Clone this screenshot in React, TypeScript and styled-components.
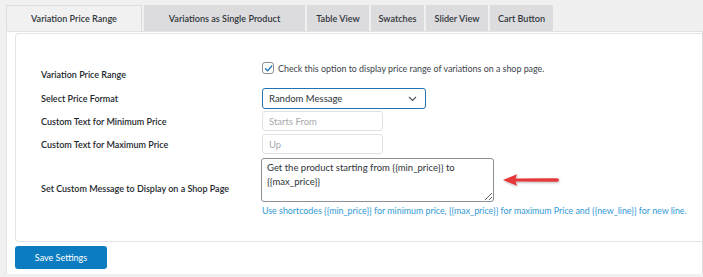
import React from "react";
import styled, { createGlobalStyle } from "styled-components";

const GlobalStyle = createGlobalStyle`
  html, body {
    margin: 0;
    padding: 0;
    background: #f0f0f1;
  }
  body {
    font-family: Lato, "Open Sans", sans-serif;
    font-size: 9.5px;
    color: #2c3338;
  }
`;

const tabs = [
  { label: "Variation Price Range", width: 136 },
  { label: "Variations as Single Product", width: 161 },
  { label: "Table View", width: 62 },
  { label: "Swatches", width: 53 },
  { label: "Slider View", width: 62 },
  { label: "Cart Button", width: 63 },
];

const App = () => (
  <Page>
    <GlobalStyle />
    <TabBar>
      {tabs.map((t, i) => (
        <Tab key={t.label} $active={i === 0} $width={t.width}>
          {t.label}
        </Tab>
      ))}
    </TabBar>
    <Panel>
      <Card>
        <Row $top={0} $height={28}>
          <Label $shift={3}>Variation Price Range</Label>
          <CheckField>
            <CheckBox>
              <svg width="9" height="9" viewBox="0 0 10 10">
                <path d="M1.6 5.2 L4 7.6 L8.6 2.2" fill="none" stroke="#2271b1" strokeWidth="1.5" strokeLinecap="round" strokeLinejoin="round" />
              </svg>
            </CheckBox>
            <CheckText>Check this option to display price range of variations on a shop page.</CheckText>
          </CheckField>
        </Row>
        <Row $top={1}>
          <Label>Select Price Format</Label>
          <SelectWrap>
            <Select defaultValue="random">
              <option value="random">Random Message</option>
            </Select>
            <Chevron width="9" height="6" viewBox="0 0 9 6">
              <path d="M1 1 L4.5 4.5 L8 1" fill="none" stroke="#50575e" strokeWidth="1.2" />
            </Chevron>
          </SelectWrap>
        </Row>
        <Row $top={2}>
          <Label>Custom Text for Minimum Price</Label>
          <TextInput placeholder="Starts From" />
        </Row>
        <Row $top={3}>
          <Label>Custom Text for Maximum Price</Label>
          <TextInput placeholder="Up" />
        </Row>
        <Row $top={4}>
          <Label>Set Custom Message to Display on a Shop Page</Label>
          <Field>
            <AreaLine>
              <TextArea defaultValue="Get the product starting from {{min_price}} to {{max_price}}" />
              <Arrow width="60" height="16" viewBox="0 0 60 16">
                <defs>
                  <filter id="sh" x="-10%" y="-30%" width="130%" height="180%">
                    <feDropShadow dx="0.5" dy="1" stdDeviation="0.8" floodColor="#000" floodOpacity="0.3" />
                  </filter>
                </defs>
                <g filter="url(#sh)">
                  <path d="M1 7 L15 1.2 L13.6 5.4 L55 5.2 Q57 5.4 57 7 Q57 8.6 55 8.8 L13.6 8.6 L15 12.8 Z" fill="#e5393a" />
                </g>
              </Arrow>
            </AreaLine>
            <Help>
              Use shortcodes {"{{min_price}}"} for minimum price, {"{{max_price}}"} for maximum Price and {"{{new_line}}"} for new line.
            </Help>
          </Field>
        </Row>
      </Card>
      <SaveButton type="button">Save Settings</SaveButton>
    </Panel>
  </Page>
);

export default App;

const Page = styled.div`
  width: 703px;
  height: 277px;
  overflow: hidden;
`;

const TabBar = styled.div`
  display: flex;
  gap: 2px;
  padding: 5px 0 0 6px;
  height: 26px;
`;

const Tab = styled.div<{ $active?: boolean; $width: number }>`
  box-sizing: border-box;
  width: ${(p) => p.$width}px;
  height: 26px;
  display: flex;
  align-items: center;
  justify-content: center;
  font-size: 9.1px;
  font-weight: 600;
  color: #32373c;
  white-space: nowrap;
  background: ${(p) => (p.$active ? "#f1f1f1" : "#dcdcde")};
  border: 1px solid #dcdcde;
  border-bottom: none;
`;

const Panel = styled.div`
  box-sizing: border-box;
  margin-left: 6px;
  width: 697px;
  height: 243px;
  background: #fff;
  border-top: 1px solid #e2e2e2;
  border-left: 1px solid #e6e6e6;
  border-right: 1px solid #dcdcdc;
  padding: 1px 0 0 8px;
`;

const Card = styled.div`
  box-sizing: border-box;
  height: 209px;
  border: 1px solid #e4e4e4;
  border-right: none;
  border-radius: 4px 0 0 4px;
  padding: 25px 0 0 25px;
`;

const Row = styled.div<{ $top: number; $height?: number }>`
  display: flex;
  align-items: center;
  margin-top: ${(p) => p.$top}px;
  min-height: ${(p) => (p.$height ? `${p.$height}px` : "0")};
`;

const Label = styled.div<{ $shift?: number }>`
  width: 221px;
  flex: none;
  font-size: 9px;
  font-weight: 600;
  color: #23282d;
  padding-top: ${(p) => p.$shift ?? 0}px;
`;

const CheckField = styled.div`
  display: flex;
  align-items: center;
  gap: 4px;
  align-self: flex-start;
  padding-top: 3px;
`;

const CheckBox = styled.span`
  box-sizing: border-box;
  width: 12px;
  height: 12px;
  border: 1px solid #8c8f94;
  border-radius: 3px;
  background: #fff;
  display: flex;
  align-items: center;
  justify-content: center;
`;

const CheckText = styled.span`
  font-size: 8.9px;
  color: #3c434a;
`;

const SelectWrap = styled.div`
  position: relative;
  width: 164px;
  height: 21px;
`;

const Select = styled.select`
  box-sizing: border-box;
  width: 100%;
  height: 100%;
  appearance: none;
  border: 1px solid #2271b1;
  border-radius: 3px;
  background: #fff;
  padding: 0 6px;
  font-family: inherit;
  font-size: 9.5px;
  color: #2c3338;
  outline: none;
`;

const Chevron = styled.svg`
  position: absolute;
  right: 9px;
  top: 8px;
  pointer-events: none;
`;

const TextInput = styled.input`
  box-sizing: border-box;
  width: 121px;
  height: 20px;
  border: 1px solid #e2e2e2;
  border-radius: 3px;
  padding: 0 6px;
  font-family: inherit;
  font-size: 9.5px;
  color: #2c3338;
  outline: none;
  &::placeholder {
    color: #a7aaad;
  }
`;

const Field = styled.div`
  display: flex;
  flex-direction: column;
`;

const AreaLine = styled.div`
  display: flex;
  align-items: center;
`;

const TextArea = styled.textarea`
  box-sizing: border-box;
  width: 233px;
  height: 44px;
  margin-left: -1px;
  border: 1px solid #8c8f94;
  border-radius: 3px;
  padding: 2px 5px;
  font-family: inherit;
  font-size: 9.5px;
  line-height: 14px;
  color: #2c3338;
  outline: none;
`;

const Arrow = styled.svg`
  margin-left: 8px;
  margin-top: 2px;
`;

const Help = styled.div`
  margin-top: 2px;
  font-size: 8.85px;
  line-height: 14px;
  white-space: nowrap;
  color: #3299d4;
`;

const SaveButton = styled.button`
  margin-top: 4px;
  width: 92px;
  height: 23px;
  border: none;
  border-radius: 3px;
  background: #0c7cc1;
  color: #fff;
  font-family: inherit;
  font-size: 9px;
  cursor: pointer;
`;
